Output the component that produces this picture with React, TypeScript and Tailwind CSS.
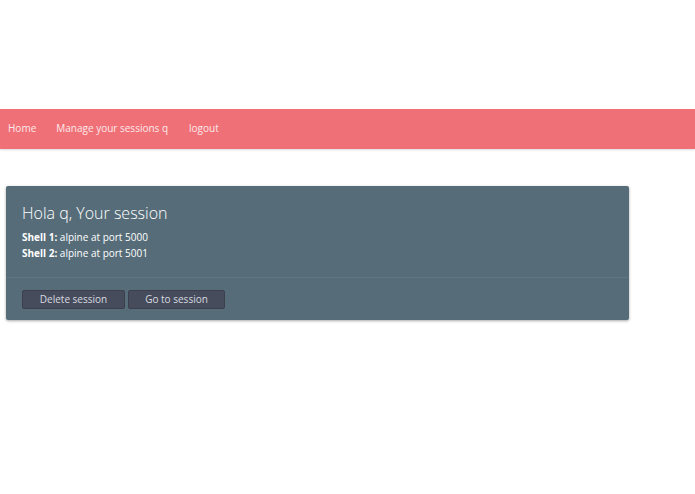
export default function App() {
  return (
    <div className="min-h-[494px] bg-white" style={{ fontFamily: '"Open Sans", "Liberation Sans", sans-serif' }}>
      <div className="h-[109px]" />
      <nav className="flex h-[40px] items-center bg-[#f07077] pb-[1px] pl-[8px] text-[10px] text-[#fde9ea] shadow-[0_1px_2px_rgba(0,0,0,0.15)]">
        <a className="mr-[20px]">Home</a>
        <a className="mr-[21px]">Manage your sessions q</a>
        <a>logout</a>
      </nav>
      <section className="ml-[6px] mt-[37px] w-[623px] rounded-[2px] bg-[#566d79] shadow-[0_1px_3px_rgba(0,0,0,0.35)]">
        <div className="px-[16px] pb-[16px] pt-[16px] text-white">
          <h1 className="text-[16px] font-light leading-[22px]">Hola q, Your session</h1>
          <p className="mt-[5px] text-[10px] leading-[16px]">
            <span className="font-bold">Shell 1:</span> alpine at port 5000
          </p>
          <p className="text-[10px] leading-[16px]">
            <span className="font-bold">Shell 2:</span> alpine at port 5001
          </p>
        </div>
        <div className="flex gap-[3px] border-t border-[#5f7682] px-[16px] pb-[11px] pt-[12px]">
          <button className="h-[19px] w-[103px] rounded-[2px] border border-[#3b404c] bg-[#464c5c] text-[10px] text-[#d9dbe0]">
            Delete session
          </button>
          <button className="h-[19px] w-[97px] rounded-[2px] border border-[#3b404c] bg-[#464c5c] text-[10px] text-[#d9dbe0]">
            Go to session
          </button>
        </div>
      </section>
    </div>
  );
}
